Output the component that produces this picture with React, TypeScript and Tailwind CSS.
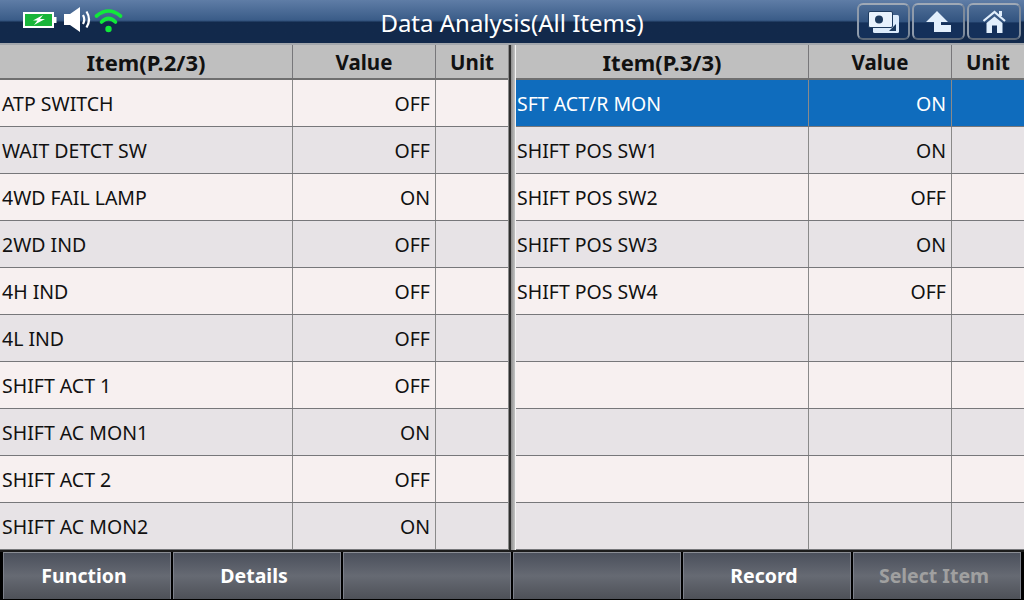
import React from 'react';

const FONT = "font-['Noto_Sans','DejaVu_Sans',sans-serif]";

const LEFT: [string, string][] = [
  ['ATP SWITCH', 'OFF'],
  ['WAIT DETCT SW', 'OFF'],
  ['4WD FAIL LAMP', 'ON'],
  ['2WD IND', 'OFF'],
  ['4H IND', 'OFF'],
  ['4L IND', 'OFF'],
  ['SHIFT ACT 1', 'OFF'],
  ['SHIFT AC MON1', 'ON'],
  ['SHIFT ACT 2', 'OFF'],
  ['SHIFT AC MON2', 'ON'],
];

const RIGHT: [string, string][] = [
  ['SFT ACT/R MON', 'ON'],
  ['SHIFT POS SW1', 'ON'],
  ['SHIFT POS SW2', 'OFF'],
  ['SHIFT POS SW3', 'ON'],
  ['SHIFT POS SW4', 'OFF'],
  ['', ''],
  ['', ''],
  ['', ''],
  ['', ''],
  ['', ''],
];

const BUTTONS = ['Function', 'Details', '', '', 'Record', 'Select Item'];

const Row = ({ item, value, odd, active, inset }: { item: string; value: string; odd: boolean; active: boolean; inset: string }) => {
  const bg = active ? 'bg-[#0f6cbd] text-white' : odd ? 'bg-[#e7e3e6] text-[#111]' : 'bg-[#f7f0f0] text-[#111]';
  return (
    <div className="flex h-[47px] border-b border-[#77777a] text-[19.5px] leading-[48px]">
      <div className={`w-[293px] border-r border-[#8a8a8a] ${inset} ${bg}`}>{item}</div>
      <div className={`w-[143px] border-r border-[#8a8a8a] pr-[5px] text-right ${bg}`}>{value}</div>
      <div className={`flex-1 ${bg}`} />
    </div>
  );
};

const Table = ({ page, rows, activeRow, className, inset }: { page: string; rows: [string, string][]; activeRow?: number; className: string; inset: string }) => (
  <div className={`flex flex-col ${className}`}>
    <div className="flex h-[35px] border-b-2 border-[#6f6f6f] bg-[#bfbfbf] text-center font-bold leading-[34px] text-[#111]">
      <div className="w-[293px] border-r border-[#77777a] text-[22px]">{page}</div>
      <div className="w-[143px] border-r border-[#77777a] text-[20.5px]">Value</div>
      <div className="flex-1 text-[20.5px]">Unit</div>
    </div>
    {rows.map(([item, value], i) => (
      <Row key={i} item={item} value={value} odd={i % 2 === 1} active={i === activeRow} inset={inset} />
    ))}
  </div>
);

const TopButton = ({ width, children }: { width: string; children: React.ReactNode }) => (
  <div className={`flex h-[37px] items-center justify-center rounded-[6px] border-2 border-t-[#9fa9b6] border-r-[#7d8a9b] border-b-[#5a6778] border-l-[#8f9bab] bg-gradient-to-b from-[#4d6d96] from-0% via-[#335480] via-50% to-[#14305a] to-55% ${width}`}>
    {children}
  </div>
);

export default function App() {
  return (
    <div className={`flex h-[600px] w-[1024px] flex-col overflow-hidden bg-[#2a2a2a] ${FONT}`}>
      <header className="relative flex h-[45px] items-start border-b-2 border-[#a3a7ac] bg-gradient-to-b from-[#5f7da6] from-0% via-[#3a5c88] via-47% to-[#12294b] to-52%">
        <svg width="100" height="26" viewBox="0 0 100 26" className="ml-[23px] mt-[7px]">
          <rect x="1" y="6" width="29" height="14" fill="#19b53a" stroke="#fff" strokeWidth="2" />
          <rect x="31" y="10" width="2.5" height="6" fill="#fff" />
          <path d="M20 8 L10 13.5 L14.5 13.5 L11 18 L22 12 L17 12 Z" fill="#fff" />
          <path d="M41 7 H47 L57 0 V25 L47 18 H41 Z" fill="#fff" />
          <path d="M60 8 Q62.5 12.5 60 17 M63.5 4.5 Q68.5 12.5 63.5 20.5" fill="none" stroke="#fff" strokeWidth="2.2" />
          <path d="M73.5 9 Q85.5 -1 97.5 9" fill="none" stroke="#11e83a" strokeWidth="3.6" strokeLinecap="round" />
          <path d="M78.5 15 Q85.5 8 92.5 15" fill="none" stroke="#11e83a" strokeWidth="3.6" strokeLinecap="round" />
          <circle cx="85.5" cy="22" r="3.2" fill="#11e83a" />
        </svg>
        <div className="absolute inset-x-0 top-[7px] text-center text-[24px] leading-[32px] text-white">Data Analysis(All Items)</div>
        <div className="ml-auto mt-[3px] flex gap-[2px] pr-[3px]">
          <TopButton width="w-[53px]">
            <svg width="31" height="22" viewBox="0 0 31 22">
              <rect x="5" y="4" width="26" height="18" rx="1.5" fill="#dcebfb" />
              <rect x="0.5" y="0.5" width="24" height="16" rx="1.5" fill="#e8f2fd" stroke="#1d3a5e" />
              <circle cx="11" cy="8.5" r="4" fill="#1d3a5e" />
              <path d="M21 20 L28 13 V20 Z" fill="#1d3a5e" />
            </svg>
          </TopButton>
          <TopButton width="w-[53px]">
            <svg width="25" height="21" viewBox="0 0 25 21">
              <path d="M0 11 L11 0 L22 11 H15 V14 H25 V21 H8 V11 Z" fill="#e2effc" />
            </svg>
          </TopButton>
          <TopButton width="w-[54px]">
            <svg width="23" height="23" viewBox="0 0 23 23">
              <path d="M0.5 11 L11.5 2 L22 11" fill="none" stroke="#e2effc" strokeWidth="2.2" />
              <path d="M11.5 6.5 L19.5 13 V23 H14 V15.5 H9 V23 H3.5 V13 Z" fill="#e2effc" />
              <rect x="16" y="1" width="3" height="5" fill="#e2effc" />
            </svg>
          </TopButton>
        </div>
      </header>

      <main className="flex h-[505px] bg-[#f7f0f0]">
        <Table page="Item(P.2/3)" rows={LEFT} className="w-[509px] border-r border-[#8a8a8a]" inset="pl-[2px]" />
        <div className="w-[7px] border-l-2 border-r border-l-[#2e2e2e] border-r-[#f4f4f4] bg-gradient-to-r from-[#8e8e8e] to-[#c4c4c4]" />
        <Table page="Item(P.3/3)" rows={RIGHT} activeRow={0} className="w-[508px]" inset="pl-[1px]" />
      </main>

      <footer className="flex h-[50px] gap-[2px] border-t-2 border-[#1c1c1c] bg-black pb-[1px] pl-[3px]">
        {BUTTONS.map((label, i) => (
          <div
            key={i}
            className={`flex h-full w-[168px] items-center justify-center border-x border-t border-x-[#7c808a] border-t-[#8b8e95] bg-gradient-to-b from-[#4b505c] via-[#666a73] to-[#4e5158] pr-[6px] text-[19.5px] font-bold ${
              label === 'Select Item' ? 'text-[#a0a0a0]' : 'text-white'
            }`}
          >
            {label}
          </div>
        ))}
      </footer>
    </div>
  );
}
